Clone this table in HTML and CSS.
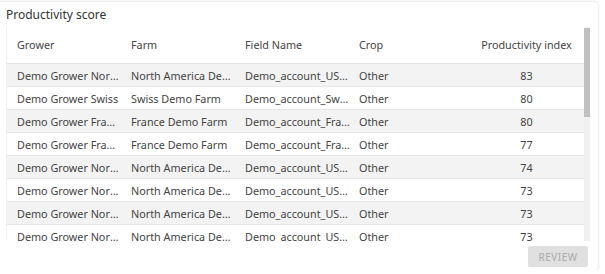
FILE: index.html
```html
<!DOCTYPE html>
<html>
<head>
<meta charset="utf-8">
<link rel="stylesheet" href="styles.css">
</head>
<body>
<div class="card">
  <div class="title">Productivity score</div>
  <div class="table-area">
    <div class="table-wrap">
      <table class="grid">
        <thead>
          <tr><th class="c1">Grower</th><th class="c2">Farm</th><th class="c3">Field Name</th><th class="c4">Crop</th><th class="c5">Productivity index</th></tr>
        </thead>
        <tbody>
          <tr><td class="c1">Demo Grower North America</td><td class="c2">North America Demo Farm</td><td class="c3">Demo_account_USA_1</td><td class="c4">Other</td><td class="c5">83</td></tr>
          <tr><td class="c1">Demo Grower Swiss</td><td class="c2">Swiss Demo Farm</td><td class="c3">Demo_account_Swiss_1</td><td class="c4">Other</td><td class="c5">80</td></tr>
          <tr><td class="c1">Demo Grower France</td><td class="c2">France Demo Farm</td><td class="c3">Demo_account_France_1</td><td class="c4">Other</td><td class="c5">80</td></tr>
          <tr><td class="c1">Demo Grower France</td><td class="c2">France Demo Farm</td><td class="c3">Demo_account_France_2</td><td class="c4">Other</td><td class="c5">77</td></tr>
          <tr><td class="c1">Demo Grower North America</td><td class="c2">North America Demo Farm</td><td class="c3">Demo_account_USA_2</td><td class="c4">Other</td><td class="c5">74</td></tr>
          <tr><td class="c1">Demo Grower North America</td><td class="c2">North America Demo Farm</td><td class="c3">Demo_account_USA_3</td><td class="c4">Other</td><td class="c5">73</td></tr>
          <tr><td class="c1">Demo Grower North America</td><td class="c2">North America Demo Farm</td><td class="c3">Demo_account_USA_4</td><td class="c4">Other</td><td class="c5">73</td></tr>
          <tr><td class="c1">Demo Grower North America</td><td class="c2">North America Demo Farm</td><td class="c3">Demo_account_USA_5</td><td class="c4">Other</td><td class="c5">73</td></tr>
        </tbody>
      </table>
    </div>
    <div class="scrollbar"><div class="thumb"></div></div>
  </div>
  <div class="actions">
    <button class="btn" disabled>REVIEW</button>
  </div>
</div>
</body>
</html>
```

FILE: styles.css
```css
html, body {
  margin: 0;
  padding: 0;
  background: #ffffff;
}
body {
  font-family: "Noto Sans", "Liberation Sans", sans-serif;
  color: #444;
}
.card {
  margin: 2px 0 0 -4px;
  width: 602px;
  height: 268px;
  background: #fff;
  border-radius: 4px;
  box-shadow: 0 0 3px rgba(0, 0, 0, 0.18);
  box-sizing: border-box;
  padding: 0 8px 0 10px;
  display: flex;
  flex-direction: column;
}
.title {
  font-size: 12px;
  color: #333;
  height: 25px;
  line-height: 25px;
}
.table-area {
  display: flex;
  height: 214px;
}
.table-wrap {
  width: 578px;
  overflow: hidden;
  border-left: 1px solid #f0f0f0;
  box-sizing: border-box;
}
.scrollbar {
  width: 6px;
  background: #f1f1f1;
  padding-top: 1px;
}
.thumb {
  height: 89px;
  background: #c1c1c1;
}
.grid {
  border-collapse: collapse;
  table-layout: fixed;
  width: 577px;
  font-size: 10.8px;
}
.grid th, .grid td {
  box-sizing: border-box;
  white-space: nowrap;
  overflow: hidden;
  text-overflow: ellipsis;
  padding: 0 4px;
}
.grid th {
  font-weight: normal;
  color: #444;
  height: 36px;
  text-align: left;
  border-bottom: 1px solid #e3e3e3;
  background: #fff;
}
.grid td {
  height: 23px;
  padding-top: 1px;
  border-bottom: 1px solid #e6e6e6;
  color: #444;
}
.grid tbody tr:nth-child(odd) td {
  background: #f3f3f3;
}
.c1 { width: 120px; }
.grid th.c1, .grid td.c1 { padding-left: 10px; padding-right: 8px; }
.c2 { width: 114px; }
.c3 { width: 114px; }
.c4 { width: 114px; }
.c5 { width: 115px; }
.grid th.c5, .grid td.c5 { text-align: center; }
.actions {
  display: flex;
  justify-content: flex-end;
  padding-top: 5px;
}
.btn {
  width: 60px;
  height: 21px;
  border: none;
  border-radius: 2px;
  background: #e0e0e0;
  color: #aaa;
  font-family: "Noto Sans", "Liberation Sans", sans-serif;
  font-size: 10px;
  letter-spacing: 0.5px;
  padding: 0;
  margin-right: 2px;
}
```
